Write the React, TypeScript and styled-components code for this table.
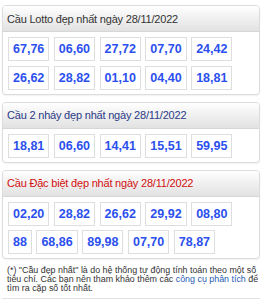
import React from "react";
import styled, { createGlobalStyle } from "styled-components";

const Global = createGlobalStyle`
  html, body { margin: 0; padding: 0; background: #fff; }
  body { font-family: "Liberation Sans", Arial, sans-serif; }
`;

const Page = styled.div`
  width: 263px;
  padding: 5px 3px 0 2px;
  box-sizing: border-box;
`;

const Panel = styled.section`
  border: 1px solid #dcdcdc;
  border-radius: 4px;
  background: #fff;
  box-shadow: 0 1px 2px rgba(0, 0, 0, 0.06);
  margin-bottom: 7px;
  overflow: hidden;
`;

const Header = styled.h3<{ $tone: string }>`
  margin: 0;
  height: 25px;
  display: flex;
  align-items: center;
  padding: 0 4px;
  font-size: 11px;
  letter-spacing: -0.2px;
  font-weight: normal;
  color: ${(p) => p.$tone};
  background: linear-gradient(to bottom, #ffffff 0%, #f1f1f1 45%, #e2e2e2 100%);
  border-bottom: 1px solid #d6d6d6;
`;

const Body = styled.div`
  display: flex;
  flex-direction: column;
  gap: 4.5px;
  padding: 5px 5px 4px;
`;

const Row = styled.div`
  display: flex;
  gap: 4.5px;
`;

const Cell = styled.span`
  box-sizing: border-box;
  height: 24px;
  display: flex;
  align-items: center;
  padding: 0 4px;
  border: 1px solid #dedede;
  font-size: 12.5px;
  font-weight: bold;
  color: #2c50ee;
`;

const Note = styled.p`
  margin: 0;
  padding: 0 3px 5px 5px;
  font-size: 8.9px;
  line-height: 9px;
  color: #333;
  white-space: nowrap;
  border-bottom: 1px solid #e2e2e2;
`;

const Link = styled.a`
  color: #1f5bb5;
  text-decoration: none;
`;

type Block = { title: string; tone: string; rows: string[][] };

const blocks: Block[] = [
  {
    title: "Cầu Lotto đẹp nhất ngày 28/11/2022",
    tone: "#333333",
    rows: [
      ["67,76", "06,60", "27,72", "07,70", "24,42"],
      ["26,62", "28,82", "01,10", "04,40", "18,81"],
    ],
  },
  {
    title: "Cầu 2 nháy đẹp nhất ngày 28/11/2022",
    tone: "#2b3a86",
    rows: [["18,81", "06,60", "14,41", "15,51", "59,95"]],
  },
  {
    title: "Cầu Đặc biệt đẹp nhất ngày 28/11/2022",
    tone: "#d20f0f",
    rows: [
      ["02,20", "28,82", "26,62", "29,92", "08,80"],
      ["88", "68,86", "89,98", "07,70", "78,87"],
    ],
  },
];

export default function App() {
  return (
    <Page>
      <Global />
      {blocks.map((b) => (
        <Panel key={b.title}>
          <Header $tone={b.tone}>{b.title}</Header>
          <Body>
            {b.rows.map((r, i) => (
              <Row key={i}>
                {r.map((n, j) => (
                  <Cell key={j}>{n}</Cell>
                ))}
              </Row>
            ))}
          </Body>
        </Panel>
      ))}
      <Note>
        (*) "Cầu đẹp nhất" là do hệ thống tự động tính toán theo một số
        <br />
        tiêu chí. Các bạn nên tham khảo thêm các{" "}
        <Link href="#">công cụ phân tích</Link> để
        <br />
        tìm ra cặp số tốt nhất.
      </Note>
    </Page>
  );
}
